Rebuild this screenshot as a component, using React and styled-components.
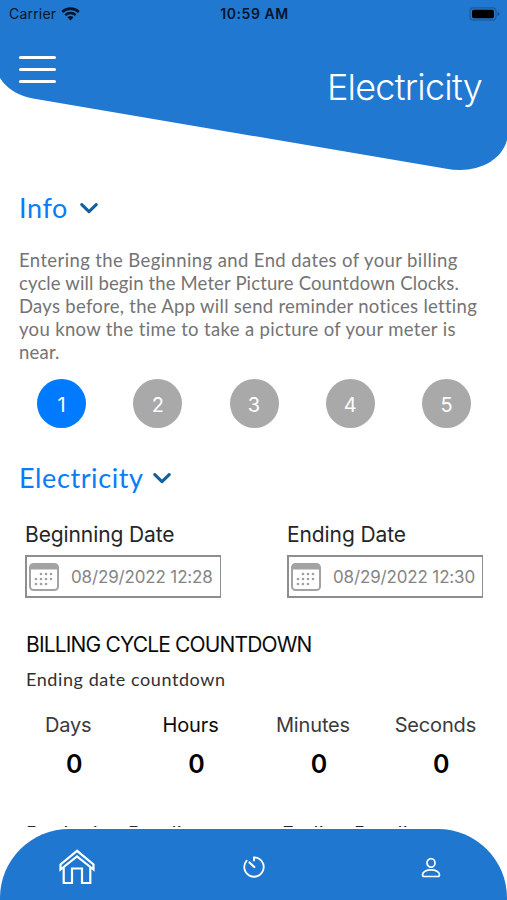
import React, { Component } from 'react';
import styled, { createGlobalStyle } from 'styled-components';

const GlobalStyle = createGlobalStyle`
    * { box-sizing: border-box; }
    body { margin: 0; background: #fff; font-family: Inter, "Liberation Sans", sans-serif; }
    h1, h2, h3, h4, p { margin: 0; font-weight: 400; }
    svg { display: block; flex: none; }
`;
const Screen = styled.div`
    display: flex;
    flex-direction: column;
    width: 507px;
    height: 900px;
    overflow: hidden;
    background: #fff;
`;
const Header = styled.header`
    position: relative;
    height: 171px;
    flex: none;
`;
const HeaderShape = styled.svg`
    position: absolute;
    top: 0;
    left: 0;
    z-index: 0;
`;
const StatusBar = styled.div`
    position: relative;
    display: grid;
    grid-template-columns: 1fr auto 1fr;
    align-items: center;
    height: 27px;
    padding: 0 7px 0 9px;
    color: #03152c;
    font-size: 14px;
`;
const Carrier = styled.div`
    display: flex;
    align-items: center;
    gap: 5px;
    letter-spacing: 0.2px;
`;
const Time = styled.div`
    font-weight: 600;
    letter-spacing: 0.55px;
`;
const BatteryIcon = styled.svg`
    justify-self: end;
`;
const TitleRow = styled.div`
    position: relative;
    display: flex;
    justify-content: space-between;
    padding: 28px 25px 0 19px;
`;
const MenuButton = styled.button`
    display: flex;
    flex-direction: column;
    gap: 9px;
    width: 37px;
    height: 28px;
    margin-top: 1px;
    padding: 0;
    border: 0;
    background: none;
`;
const MenuLine = styled.span`
    height: 3px;
    border-radius: 2px;
    background: #fff;
`;
const Title = styled.h1`
    margin-top: 10px;
    color: #fff;
    font-size: 36px;
    font-weight: 300;
    line-height: 44px;
    letter-spacing: -0.75px;
`;
const Content = styled.main`
    height: 656px;
    flex: none;
    overflow: hidden;
    padding: 21px 25px 0 19px;
`;
const SectionHead = styled.div`
    display: flex;
    align-items: center;
    gap: ${props => props.$gap}px;
    height: 32px;
`;
const SectionTitle = styled.h2`
    color: #0a7cf8;
    font-family: Lato, sans-serif;
    font-size: 27px;
    line-height: 32px;
    letter-spacing: 0.6px;
`;
const InfoText = styled.p`
    display: flex;
    flex-direction: column;
    margin-top: 25px;
    color: #747474;
    font-family: Lato, sans-serif;
    font-size: 18.5px;
    line-height: 23px;
    white-space: nowrap;
`;
const Line = styled.span`
    letter-spacing: ${props => props.$spacing}px;
`;
const Steps = styled.div`
    display: flex;
    justify-content: space-between;
    margin-top: 15px;
    padding: 0 11px 0 18px;
`;
const Step = styled.div`
    display: flex;
    align-items: center;
    justify-content: center;
    width: 49px;
    height: 49px;
    border-radius: 50%;
    background: ${props => props.$active ? '#007aff' : '#a9a9a9'};
    color: #fff;
    font-size: 20px;
    padding-top: 2px;
`;
const Electricity = styled.section`
    margin-top: 34px;
`;
const Dates = styled.div`
    display: flex;
    justify-content: space-between;
    margin: 27px -1px 0 6px;
`;
const DateField = styled.div`
    width: 196px;
`;
const Label = styled.h4`
    color: #262626;
    font-size: 21px;
    line-height: 28px;
    letter-spacing: -0.1px;
    white-space: nowrap;
`;
const DateBox = styled.div`
    display: flex;
    align-items: center;
    gap: 12px;
    height: 43px;
    margin-top: 6px;
    padding: 1px 0 0 2px;
    border: 2px solid #8e8e8e;
    border-right-width: 1.500px;
    color: #858585;
    font-size: 17px;
    letter-spacing: -0.15px;
    white-space: nowrap;
`;
const Countdown = styled.div`
    margin-top: 33px;
    padding-left: 7px;
`;
const CountTitle = styled.h3`
    color: #0c0c0c;
    font-size: 21px;
    line-height: 28px;
    letter-spacing: -0.84px;
`;
const CountNote = styled.p`
    margin-top: 8px;
    color: #303030;
    font-family: Lato, sans-serif;
    font-size: 18px;
    line-height: 24px;
    letter-spacing: 0.58px;
`;
const Counters = styled.div`
    display: grid;
    grid-template-columns: repeat(4, 122.4px);
    margin: 21px 0 0 -19px;
`;
const Counter = styled.div`
    text-align: center;
`;
const Unit = styled.div`
    color: ${props => props.$strong ? '#0c0c0c' : '#3a3a3a'};
    font-size: 20px;
    line-height: 26px;
    letter-spacing: -0.15px;
`;
const Value = styled.div`
    margin-top: 12px;
    padding-left: 12px;
    color: #000;
    font-size: 25px;
    font-weight: 600;
    line-height: 28px;
`;
const Readings = styled.div`
    display: grid;
    grid-template-columns: 256px 1fr;
    margin-top: 42px;
    color: #262626;
    font-size: 20px;
    line-height: 28px;
    letter-spacing: 0.2px;
`;
const TabBar = styled.nav`
    display: grid;
    grid-template-columns: 153px 1fr 153px;
    align-items: center;
    justify-items: center;
    height: 71px;
    margin-top: 2px;
    flex: none;
    padding-top: 5px;
    border-radius: 69px 69px 0 0;
    background: #1f77d0;
`;

const infoLines = [
    { text: 'Entering the Beginning and End dates of your billing', spacing: 0.39 },
    { text: 'cycle will begin the Meter Picture Countdown Clocks.', spacing: 0.14 },
    { text: 'Days before, the App will send reminder notices letting', spacing: 0.28 },
    { text: 'you know the time to take a picture of your meter is', spacing: 0.34 },
    { text: 'near.', spacing: 0.2 },
];
const units = ['Days', 'Hours', 'Minutes', 'Seconds'];

const WifiIcon = () => (
    <svg width="19" height="14" viewBox="0 0 19 14" fill="none" stroke="#03152c">
        <path d="M1.2 5C5.8.5 13.2.5 17.8 5" strokeWidth="2.6" />
        <path d="M4.3 8.1c2.9-2.8 7.5-2.8 10.4 0" strokeWidth="2.4" />
        <path d="M9.5 13.5 6.4 10.3c1.7-1.6 4.5-1.6 6.2 0Z" fill="#03152c" stroke="none" />
    </svg>
);
const Chevron = () => (
    <svg width="18" height="11" viewBox="0 0 18 11">
        <path d="m1.8 1.6 7.2 7 7.2-7" fill="none" stroke="#12609f" strokeWidth="3.1" strokeLinecap="round" strokeLinejoin="round" />
    </svg>
);
const CalendarIcon = () => {
    const dots = [[12, 10], [17, 10], [22, 10], [7, 15], [12, 15], [17, 15], [22, 15], [7, 20], [12, 20], [17, 20]];
    return (
        <svg width="30" height="28" viewBox="0 0 30 28">
            <rect x="1" y="1" width="28" height="26" rx="3.5" fill="#fff" stroke="#a3a3a3" strokeWidth="2" />
            <path d="M1 6.5V4a3 3 0 0 1 3-3h22a3 3 0 0 1 3 3v2.5Z" fill="#a3a3a3" />
            {dots.map(([x, y]) => <circle key={x + '-' + y} cx={x} cy={y + 1} r="1.3" fill="#a0a0a0" />)}
        </svg>
    );
};
const HomeIcon = () => (
    <svg width="36" height="36" viewBox="0 0 36 36" fill="none" stroke="#fff" strokeWidth="2.2">
        <path d="M18 1.8 1.5 15.500v5L18 7.500l16.500 13v-5Z" />
        <path d="M4.700 18.500V34H13V19.500h10V34h8.300V18.500" />
    </svg>
);
const TimerIcon = () => (
    <svg width="22" height="22" viewBox="0 0 22 22" fill="none" stroke="#fff" strokeWidth="1.8" strokeLinecap="round">
        <path d="M11 4.500V1.300a9.700 9.700 0 1 1-7.300 3.300" />
        <path d="m6.500 6.500 4.800 4.500" strokeWidth="2.2" />
    </svg>
);
const UserIcon = () => (
    <svg width="20" height="21" viewBox="0 0 20 21" fill="none" stroke="#fff" strokeWidth="1.700">
        <ellipse cx="10" cy="5.900" rx="4" ry="4.300" />
        <path d="M1.500 17.800c0-3 3.800-5 8.500-5s8.500 2 8.500 5c0 1.200-.7 1.700-1.800 1.700H3.300c-1.100 0-1.800-.5-1.800-1.700Z" />
    </svg>
);

class DateInput extends Component {
    render() {
        return (
            <DateField>
                <Label>{this.props.label}</Label>
                <DateBox>
                    <CalendarIcon />
                    <span>{this.props.value}</span>
                </DateBox>
            </DateField>
        )
    }
}

class App extends Component {
    constructor(props) {
        super(props);
        this.state = { step: 1 }
    }

    render() {
        return (
            <Screen>
                <GlobalStyle />
                <Header>
                    <HeaderShape width="507" height="171" viewBox="0 0 507 171">
                        <path d="M0 0H507V140C502 159 482 170 460 170Q453 170 445 168.500L33 98.500Q10 94 0 78Z" fill="#2178d1" />
                    </HeaderShape>
                    <StatusBar>
                        <Carrier>Carrier <WifiIcon /></Carrier>
                        <Time>10:59 AM</Time>
                        <BatteryIcon width="31" height="14" viewBox="0 0 31 14">
                            <rect x="1" y=".8" width="26" height="12.400" rx="3.500" fill="none" stroke="#1b5ba0" strokeWidth="1.200" />
                            <rect x="3" y="2.700" width="22" height="8.600" rx="1.800" fill="#000" />
                            <path d="M28.500 5v4q2-.6 2-2t-2-2Z" fill="#174f8c" />
                        </BatteryIcon>
                    </StatusBar>
                    <TitleRow>
                        <MenuButton aria-label="Menu">
                            <MenuLine />
                            <MenuLine />
                            <MenuLine />
                        </MenuButton>
                        <Title>Electricity</Title>
                    </TitleRow>
                </Header>
                <Content>
                    <SectionHead $gap={12}>
                        <SectionTitle>Info</SectionTitle>
                        <Chevron />
                    </SectionHead>
                    <InfoText>
                        {infoLines.map(line => <Line key={line.text} $spacing={line.spacing}>{line.text}</Line>)}
                    </InfoText>
                    <Steps>
                        {[1, 2, 3, 4, 5].map(n => (
                            <Step key={n} $active={this.state.step == n} onClick={() => this.setState({ step: n })}>{n}</Step>
                        ))}
                    </Steps>
                    <Electricity>
                        <SectionHead $gap={9}>
                            <SectionTitle>Electricity</SectionTitle>
                            <Chevron />
                        </SectionHead>
                        <Dates>
                            <DateInput label="Beginning Date" value="08/29/2022 12:28" />
                            <DateInput label="Ending Date" value="08/29/2022 12:30" />
                        </Dates>
                        <Countdown>
                            <CountTitle>BILLING CYCLE COUNTDOWN</CountTitle>
                            <CountNote>Ending date countdown</CountNote>
                            <Counters>
                                {units.map(unit => (
                                    <Counter key={unit}>
                                        <Unit $strong={unit == 'Hours'}>{unit}</Unit>
                                        <Value>0</Value>
                                    </Counter>
                                ))}
                            </Counters>
                            <Readings>
                                <span>Beginning Reading</span>
                                <span>Ending Reading</span>
                            </Readings>
                        </Countdown>
                    </Electricity>
                </Content>
                <TabBar>
                    <HomeIcon />
                    <TimerIcon />
                    <UserIcon />
                </TabBar>
            </Screen>
        )
    }
}

export default App;
